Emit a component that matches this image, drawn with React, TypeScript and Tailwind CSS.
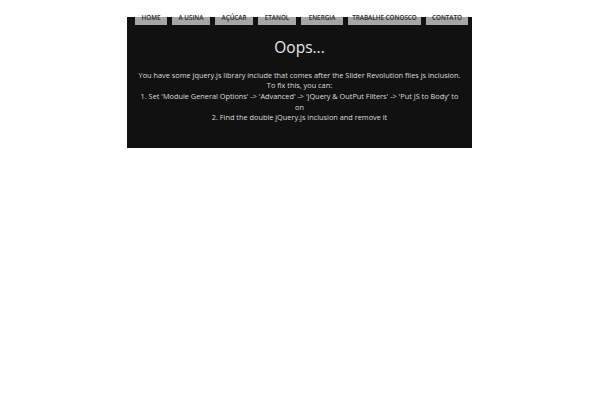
const TABS = ['HOME', 'A USINA', 'AÇÚCAR', 'ETANOL', 'ENERGIA', 'TRABALHE CONOSCO', 'CONTATO']
const TAB_W = ['w-[32px]', 'w-[38px]', 'w-[38px]', 'w-[38px]', 'w-[42px]', 'w-[73px]', 'w-[42px]']

export default function App() {
  return (
    <div className="w-[600px] h-[400px] bg-white" style={{ fontFamily: '"Open Sans", "Liberation Sans", sans-serif' }}>
      <div className="w-[345px] ml-[127px] pt-[17px]">
        <div className="bg-[#111111] h-[131px] flex flex-col">
          {/* nav tabs */}
          <nav className="flex gap-[5px] pl-[8px] h-[8px]">
            {TABS.map((t, i) => (
              <div key={t} className={`${TAB_W[i]} h-[8px] bg-[#a6a6a6] flex justify-center`}>
                <span className="text-[6.3px] leading-none font-semibold text-[#2b2b2b] -translate-y-[2px] whitespace-nowrap">{t}</span>
              </div>
            ))}
          </nav>

          <h1 className="text-center text-[#e8e8e8] text-[15.5px] leading-none mt-[15px]">Oops...</h1>

          <div className="mt-[14px] text-center text-[#dddddd] text-[7.35px] leading-[10.7px] px-[6px]">
            <p>You have some jquery.js library include that comes after the Slider Revolution files js inclusion.</p>
            <p>To fix this, you can:</p>
            <p>1. Set 'Module General Options' -&gt; 'Advanced' -&gt; 'jQuery &amp; OutPut Filters' -&gt; 'Put JS to Body' to<br />on</p>
            <p>2. Find the double jQuery.js inclusion and remove it</p>
          </div>
        </div>
      </div>
    </div>
  )
}
